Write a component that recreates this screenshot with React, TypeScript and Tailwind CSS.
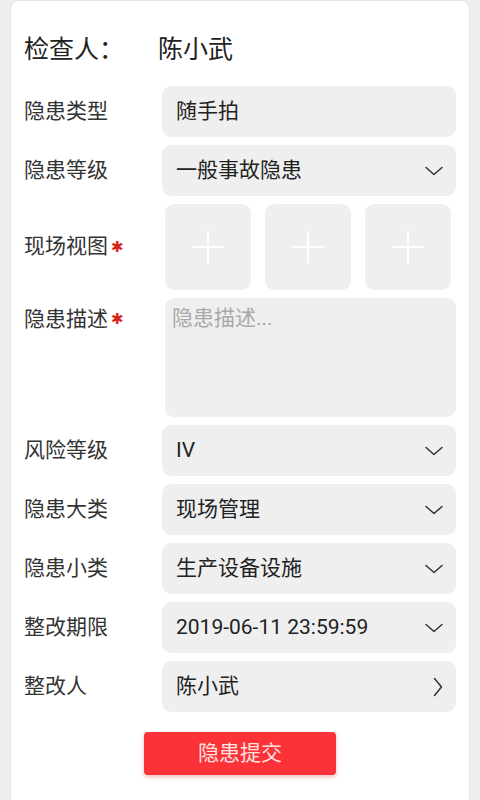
const font = { fontFamily: 'Roboto, "Noto Sans CJK SC", sans-serif' };

function Chevron() {
  return (
    <svg width="18" height="10" viewBox="0 0 18 10" fill="none" className="shrink-0">
      <path d="M1 1.5 L9 8.5 L17 1.5" stroke="#333" strokeWidth="1.5" strokeLinecap="round" strokeLinejoin="round" />
    </svg>
  );
}

function ChevronRight() {
  return (
    <svg width="10" height="20" viewBox="0 0 10 20" fill="none" className="shrink-0">
      <path d="M1.5 1.5 L8.5 10 L1.5 18.5" stroke="#333" strokeWidth="1.5" strokeLinecap="round" strokeLinejoin="round" />
    </svg>
  );
}

function Star() {
  return <span className="ml-[3px] text-[15px] leading-none text-[#d8231c]" style={{ fontFamily: '"DejaVu Sans", sans-serif' }}>✱</span>;
}

function Label({ text, required }: { text: string; required?: boolean }) {
  return (
    <div className="w-[138px] shrink-0 flex items-center text-[21px] text-[#333]">
      {text}
      {required && <Star />}
    </div>
  );
}

function SelectRow({ label, value, arrow }: { label: string; value: string; arrow?: "down" | "right" }) {
  return (
    <div className="flex items-center h-[51px]">
      <Label text={label} />
      <div className="flex-1 h-full rounded-[9px] bg-[#efefef] flex items-center justify-between pl-[14px] pr-[13px] text-[21px] text-[#222]">
        <span>{value}</span>
        {arrow === "down" && <Chevron />}
        {arrow === "right" && <ChevronRight />}
      </div>
    </div>
  );
}

function AddBox() {
  return (
    <div className="w-[86px] h-[86px] rounded-[9px] bg-[#efefef] flex items-center justify-center">
      <svg width="34" height="34" viewBox="0 0 34 34">
        <path d="M17 1 V33 M1 17 H33" stroke="#fff" strokeWidth="2" />
      </svg>
    </div>
  );
}

export default function App() {
  return (
    <div className="min-h-[800px] bg-[#efefef] px-[10px]" style={font}>
      <div className="min-h-[800px] bg-white rounded-t-[8px] border border-[#e6e6e6] border-b-0 px-[13px] pt-[27px] pb-[30px]">
        <div className="flex items-center h-[44px] text-[25px] text-[#222]">
          <div className="w-[134px]">检查人：</div>
          <div>陈小武</div>
        </div>
        <div className="mt-[14px] flex flex-col gap-[8px]">
          <SelectRow label="隐患类型" value="随手拍" />
          <SelectRow label="隐患等级" value="一般事故隐患" arrow="down" />
          <div className="flex items-center h-[86px]">
            <Label text="现场视图" required />
            <div className="ml-[3px] flex gap-[14px]">
              <AddBox />
              <AddBox />
              <AddBox />
            </div>
          </div>
          <div className="flex h-[119px]">
            <div className="pt-[6px] self-start">
              <Label text="隐患描述" required />
            </div>
            <div className="ml-[3px] flex-1 rounded-[9px] bg-[#efefef] px-[7px] pt-[5px] text-[21px] text-[#a9a9a9]">
              隐患描述...
            </div>
          </div>
          <SelectRow label="风险等级" value="IV" arrow="down" />
          <SelectRow label="隐患大类" value="现场管理" arrow="down" />
          <SelectRow label="隐患小类" value="生产设备设施" arrow="down" />
          <SelectRow label="整改期限" value="2019-06-11 23:59:59" arrow="down" />
          <SelectRow label="整改人" value="陈小武" arrow="right" />
        </div>
        <div className="mt-[20px] flex justify-center">
          <button className="w-[192px] h-[43px] rounded-[4px] bg-[#fb3237] text-[21px] text-[#ffe2e2] shadow-[0_2px_4px_rgba(200,40,40,0.3)]">
            隐患提交
          </button>
        </div>
      </div>
    </div>
  );
}
